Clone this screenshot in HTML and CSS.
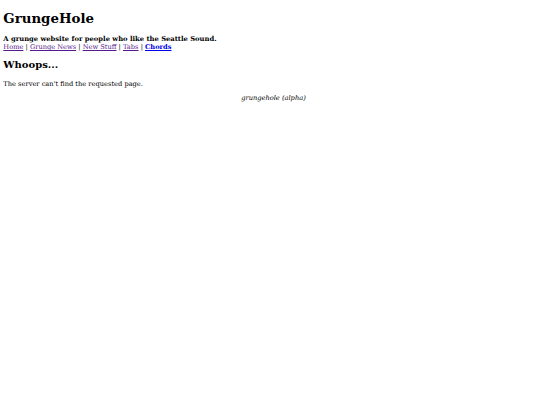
FILE: index.html
```html
<!DOCTYPE html>
<html>
<head>
<meta charset="utf-8">
<title>GrungeHole</title>
<link rel="stylesheet" href="styles.css">
</head>
<body>
<h1 class="title">GrungeHole</h1>
<div class="tagline">A grunge website for people who like the Seattle Sound.</div>
<div class="nav"><a href="#">Home</a> | <a href="#">Grunge News</a> | <a href="#">New Stuff</a> | <a href="#">Tabs</a> | <a href="#" class="current">Chords</a></div>
<h2 class="heading">Whoops...</h2>
<p class="message">The server can't find the requested page.</p>
<div class="footer">grungehole (alpha)</div>
</body>
</html>
```
FILE: styles.css
```css
body {
  margin: 3.33px;
  font-family: "DejaVu Serif", serif;
  font-size: 6.67px;
  color: #000;
  background: #fff;
}
.title {
  font-size: 13.33px;
  font-weight: bold;
  margin: 6.3px 0 9.6px;
}
.tagline {
  font-weight: bold;
  font-size: 6.78px;
}
.nav a {
  color: #551a8b;
}
.nav a.current {
  color: #0000ee;
  font-weight: bold;
}
.heading {
  font-size: 10px;
  margin: 7.3px 0 10.3px;
}
.message {
  margin: 6.67px 0;
}
.footer {
  text-align: center;
  font-style: italic;
  padding-left: 7px;
}
```
